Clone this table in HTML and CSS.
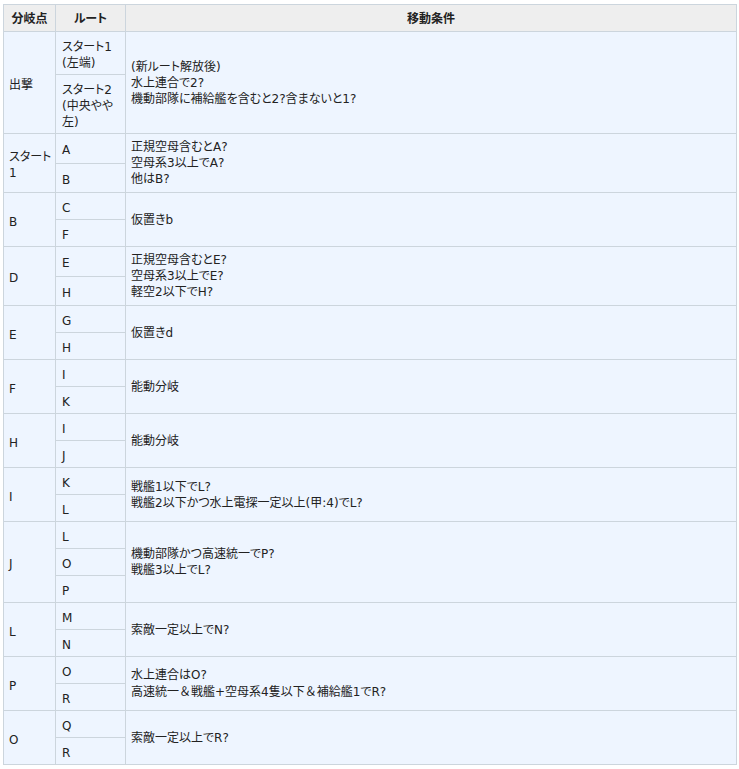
FILE: index.html
```html
<!DOCTYPE html>
<html lang="ja">
<head>
<meta charset="utf-8">
<link rel="stylesheet" href="styles.css">
</head>
<body>
<table class="route">
<colgroup><col class="c1"><col class="c2"><col class="c3"></colgroup>
<thead>
<tr><th>分岐点</th><th>ルート</th><th>移動条件</th></tr>
</thead>
<tbody>
<tr><td class="pt" rowspan="2">出撃</td><td class="pt rt">スタート1<br>(左端)</td><td rowspan="2">(新ルート解放後)<br>水上連合で2?<br>機動部隊に補給艦を含むと2?含まないと1?</td></tr>
<tr><td class="pt rt">スタート2<br>(中央やや<br>左)</td></tr>
<tr><td class="pt" rowspan="2"><span class="nw">スタート</span><br>1</td><td class="pt rt">A</td><td rowspan="2">正規空母含むとA?<br>空母系3以上でA?<br>他はB?</td></tr>
<tr><td class="pt rt">B</td></tr>
<tr><td class="pt" rowspan="2">B</td><td class="pt rt">C</td><td rowspan="2">仮置きb</td></tr>
<tr><td class="pt rt">F</td></tr>
<tr><td class="pt" rowspan="2">D</td><td class="pt rt">E</td><td rowspan="2">正規空母含むとE?<br>空母系3以上でE?<br>軽空2以下でH?</td></tr>
<tr><td class="pt rt">H</td></tr>
<tr><td class="pt" rowspan="2">E</td><td class="pt rt">G</td><td rowspan="2">仮置きd</td></tr>
<tr><td class="pt rt">H</td></tr>
<tr><td class="pt" rowspan="2">F</td><td class="pt rt">I</td><td rowspan="2">能動分岐</td></tr>
<tr><td class="pt rt">K</td></tr>
<tr><td class="pt" rowspan="2">H</td><td class="pt rt">I</td><td rowspan="2">能動分岐</td></tr>
<tr><td class="pt rt">J</td></tr>
<tr><td class="pt" rowspan="2">I</td><td class="pt rt">K</td><td rowspan="2">戦艦1以下でL?<br>戦艦2以下かつ水上電探一定以上(甲:4)でL?</td></tr>
<tr><td class="pt rt">L</td></tr>
<tr><td class="pt" rowspan="3">J</td><td class="pt rt">L</td><td rowspan="3">機動部隊かつ高速統一でP?<br>戦艦3以上でL?</td></tr>
<tr><td class="pt rt">O</td></tr>
<tr><td class="pt rt">P</td></tr>
<tr><td class="pt" rowspan="2">L</td><td class="pt rt">M</td><td rowspan="2">索敵一定以上でN?</td></tr>
<tr><td class="pt rt">N</td></tr>
<tr><td class="pt" rowspan="2">P</td><td class="pt rt">O</td><td rowspan="2">水上連合はO?<br>高速統一<span class="fw">＆</span>戦艦+空母系4隻以下<span class="fw">＆</span>補給艦1でR?</td></tr>
<tr><td class="pt rt">R</td></tr>
<tr><td class="pt" rowspan="2">O</td><td class="pt rt">Q</td><td rowspan="2">索敵一定以上でR?</td></tr>
<tr><td class="pt rt">R</td></tr>
</tbody>
</table>
</body>
</html>
```
FILE: styles.css
```css
html, body {
  margin: 0;
  padding: 0;
  background: #ffffff;
}
body {
  padding: 4px 3px;
  font-family: "DejaVu Sans", "Noto Sans CJK JP", sans-serif;
  font-size: 12px;
  line-height: 16px;
  color: #222222;
  font-feature-settings: "palt";
}
.route {
  border-collapse: collapse;
  width: 734px;
  table-layout: fixed;
}
.c1 { width: 52px; }
.c2 { width: 70px; }
.route th,
.route td {
  border: 1px solid #ccd5dd;
  padding: 5px 5px;
  text-align: left;
  vertical-align: middle;
}
.route th {
  background: #eeeeee;
  font-weight: bold;
  text-align: center;
  font-family: "Noto Sans CJK JP", sans-serif;
}
.route td {
  background: #eef5ff;
}
.route td.pt {
  padding-top: 7px;
  padding-bottom: 3px;
}
.route td.rt {
  padding-left: 6px;
}
.nw {
  white-space: nowrap;
}
.fw {
  font-family: "Noto Sans CJK JP", sans-serif;
  font-feature-settings: normal;
}
```
